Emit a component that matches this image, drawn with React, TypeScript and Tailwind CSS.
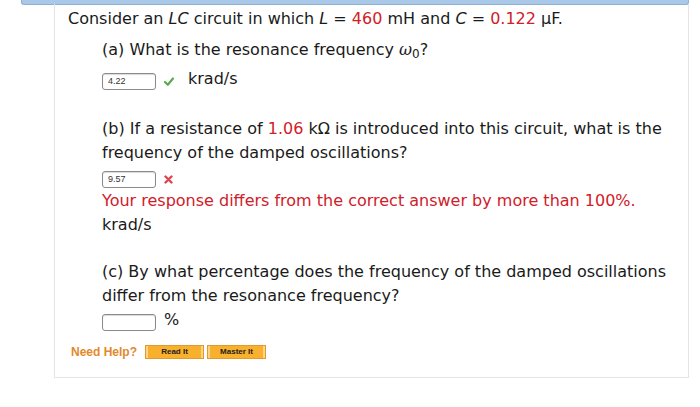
import React from "react";

const red = "text-[#d0202a]";

function Input({ value }: { value?: string }) {
  return (
    <div className="w-[54px] h-[17px] border border-[#8a8a8a] rounded-[3px] bg-white text-[9px] leading-[15px] pl-[5px] text-[#333] font-['Liberation_Sans',sans-serif] shadow-[inset_0_1px_1px_rgba(0,0,0,0.15)]">
      {value}
    </div>
  );
}

function Check() {
  return (
    <svg width="10" height="9" viewBox="0 0 10 9" className="ml-[8px]">
      <path d="M1 5 L3.8 7.8 L9 1.5" fill="none" stroke="#5aaa50" strokeWidth="2.2" strokeLinecap="round" strokeLinejoin="round" />
    </svg>
  );
}

function Cross() {
  return (
    <svg width="9" height="9" viewBox="0 0 9 9" className="ml-[8px]">
      <path d="M1.5 1.5 L7.5 7.5 M7.5 1.5 L1.5 7.5" fill="none" stroke="#e0454f" strokeWidth="2.4" strokeLinecap="round" />
    </svg>
  );
}

export default function App() {
  return (
    <div className="w-[700px] h-[407px] bg-white font-['DejaVu_Sans',Verdana,sans-serif] text-[16px] text-[#1a1a1a]">
      <div className="ml-[21px] w-[668px] h-[5px] bg-[#aac9e9] border border-t-0 border-[#8eb0d6] rounded-b-[3px]" />
      <div className="ml-[54px] w-[635px] h-[374px] -mt-[1px] border-l border-r border-b border-[#e4e4e4] pl-[13px] pt-[3px]">
        <div className="leading-[24px]">
          Consider an <i>LC</i> circuit in which <i>L</i> = <span className={red}>460</span> mH and <i>C</i> ={" "}
          <span className={red}>0.122</span> μF.
        </div>
        <div className="pl-[34px]">
          <div className="mt-[7px] leading-[24px]">
            (a) What is the resonance frequency <i className="font-['DejaVu_Serif',serif]">ω</i>
            <sub className="text-[12px]">0</sub>?
          </div>
          <div className="mt-[11px] flex items-center h-[17px]">
            <Input value="4.22" />
            <Check />
            <span className="ml-[14px] leading-[20px] -mt-[5px]">krad/s</span>
          </div>
          <div className="mt-[27px] leading-[24px]">
            (b) If a resistance of <span className={red}>1.06</span> kΩ is introduced into this circuit, what is the
            <br />
            frequency of the damped oscillations?
          </div>
          <div className="mt-[6px] flex items-center h-[17px]">
            <Input value="9.57" />
            <Cross />
          </div>
          <div className={`mt-[1px] leading-[24px] ${red}`}>
            Your response differs from the correct answer by more than 100%.
          </div>
          <div className="leading-[24px]">krad/s</div>
          <div className="mt-[23px] leading-[24px]">
            (c) By what percentage does the frequency of the damped oscillations
            <br />
            differ from the resonance frequency?
          </div>
          <div className="mt-[6px] flex items-center h-[17px]">
            <Input />
            <span className="ml-[8px] leading-[20px] -mt-[6px]">%</span>
          </div>
        </div>
        <div className="mt-[12px] ml-[3px] flex items-center font-['Liberation_Sans',Arial,sans-serif]">
          <span className="text-[12px] font-bold text-[#e3892b]">Need Help?</span>
          <button className="ml-[8px] w-[59px] h-[14px] bg-[#f9b02c] border border-[#e09a30] shadow-[inset_2px_0_0_#fcd58a,inset_-2px_0_0_#fcd58a] text-[8px] font-bold text-[#222] leading-[12px]">
            Read It
          </button>
          <button className="ml-[3px] w-[59px] h-[14px] bg-[#f9b02c] border border-[#e09a30] shadow-[inset_2px_0_0_#fcd58a,inset_-2px_0_0_#fcd58a] text-[8px] font-bold text-[#222] leading-[12px]">
            Master It
          </button>
        </div>
      </div>
    </div>
  );
}
